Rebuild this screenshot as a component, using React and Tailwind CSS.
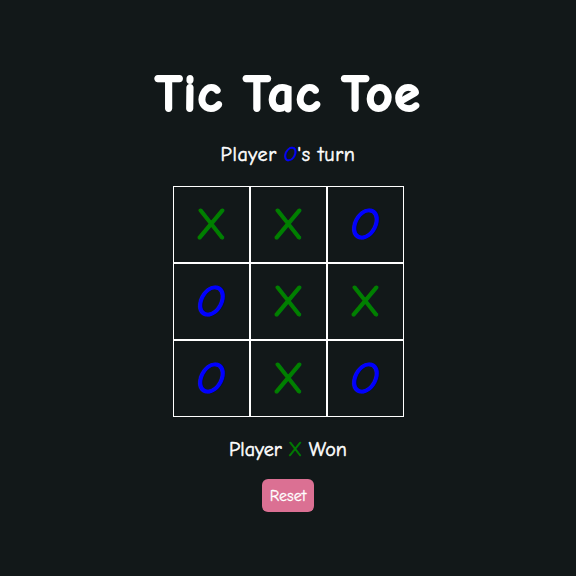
export default function App() {
  const cells = ["X", "X", "O", "O", "X", "X", "O", "X", "O"];
  return (
    <div
      className="w-[576px] h-[576px] bg-[#121819] text-white flex flex-col items-center"
      style={{ fontFamily: '"Comic Sans MS", "Comic Neue", cursive' }}
    >
      <h1 className="mt-[61px] text-[52px] leading-[66px] font-bold tracking-[1.4px] [-webkit-text-stroke:2px_white]">
        Tic Tac Toe
      </h1>
      <p className="mt-[16px] text-[20px] leading-[24px] tracking-[0.6px] [-webkit-text-stroke:0.5px_white]">
        Player <span className="text-[#0000ff] [-webkit-text-stroke:0.5px_#0000ff] italic">O</span>'s turn
      </p>
      <div className="mt-[19px] grid grid-cols-[repeat(3,77px)]">
        {cells.map((c, i) => (
          <div
            key={i}
            className={`w-[77px] h-[77px] border border-white flex items-center justify-center text-[44px] ${
              c === "X"
                ? "text-[#008000] [-webkit-text-stroke:1.2px_#008000]"
                : "text-[#0000ff] [-webkit-text-stroke:1.2px_#0000ff] italic"
            }`}
          >
            {c}
          </div>
        ))}
      </div>
      <p className="mt-[21px] text-[20px] leading-[24px] [-webkit-text-stroke:0.5px_white]">
        Player <span className="text-[#008000] [-webkit-text-stroke:0.5px_#008000]">X</span> Won
      </p>
      <button className="mt-[17px] bg-[#db7093] text-white text-[16px] rounded-[6px] px-[8px] h-[33px] [-webkit-text-stroke:0.3px_white]">
        Reset
      </button>
    </div>
  );
}
